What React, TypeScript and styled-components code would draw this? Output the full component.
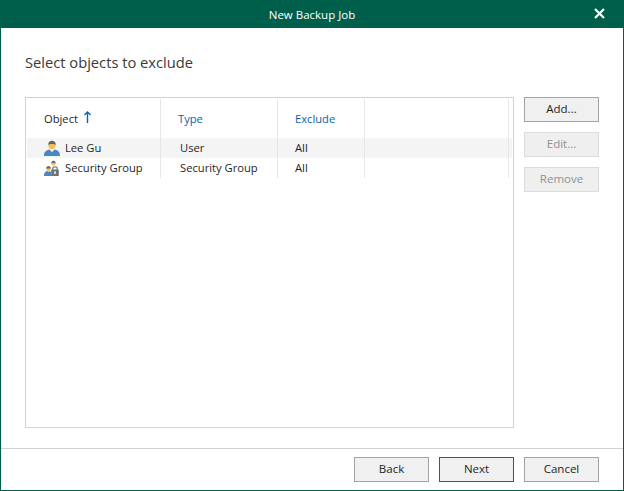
import React from 'react'
import styled, { createGlobalStyle } from 'styled-components'

const GlobalStyle = createGlobalStyle`
  html, body {
    margin: 0;
    padding: 0;
    background: #ffffff;
  }
  body {
    font-family: 'Open Sans', 'Noto Sans', sans-serif;
    font-size: 11.5px;
    color: #1f1f1f;
  }
`

const Window = styled.div`
  width: 624px;
  height: 491px;
  box-sizing: border-box;
  display: flex;
  flex-direction: column;
  border: 1px solid #005f4b;
  border-top: 0;
  background: #ffffff;
  overflow: hidden;
`
const TitleBar = styled.div`
  height: 28px;
  flex: none;
  margin: 0 -1px;
  position: relative;
  display: flex;
  align-items: center;
  justify-content: center;
  background: #005f4b;
  color: #ffffff;
  font-size: 11.5px;
`
const CloseIcon = styled.svg`
  position: absolute;
  right: 19px;
  top: 8px;
  width: 11px;
  height: 11px;
`
const Body = styled.div`
  flex: 1;
  display: flex;
  flex-direction: column;
  padding: 0 24px;
`
const Heading = styled.div`
  height: 69px;
  padding-top: 24px;
  box-sizing: border-box;
  font-size: 14.7px;
  line-height: 20px;
  color: #3a3a3a;
`
const Content = styled.div`
  display: flex;
  gap: 10px;
`
const TableBox = styled.div`
  width: 489px;
  height: 331px;
  box-sizing: border-box;
  border: 1px solid #d2d2d2;
  padding: 1px 1px 0;
  font-size: 11.2px;
`
const Row = styled.div<{ $header?: boolean; $selected?: boolean }>`
  display: grid;
  grid-template-columns: 134px 117px 87px 144px 1fr;
  height: ${({ $header }) => ($header ? '39px' : '20px')};
  background: ${({ $selected }) => ($selected ? '#f4f4f4' : 'transparent')};
`
const Cell = styled.div<{ $plain?: boolean }>`
  display: flex;
  align-items: center;
  box-sizing: border-box;
  border-right: ${({ $plain }) => ($plain ? '0' : '1px solid #e6e6e6')};
  white-space: nowrap;
`
const ObjectCell = styled(Cell)`
  padding: 0 0 2px 17px;
  gap: 5px;
`
const IconSlot = styled.span`
  display: flex;
  margin-top: 2px;
`
const DataCell = styled(Cell)<{ $tight?: boolean }>`
  padding: 0 0 2px ${({ $tight }) => ($tight ? '17px' : '19px')};
`
const HeaderCell = styled(Cell)<{ $link?: boolean }>`
  padding-left: 17px;
  color: ${({ $link }) => ($link ? '#0a64a8' : '#1f1f1f')};
`
const SortArrow = styled.svg`
  margin-left: 6px;
  margin-top: -3px;
  width: 7px;
  height: 12px;
`
const Side = styled.div`
  width: 75px;
  display: flex;
  flex-direction: column;
  gap: 10px;
`
const Button = styled.button<{ $primary?: boolean }>`
  width: 75px;
  height: 25px;
  padding: 0 0 2px;
  box-sizing: border-box;
  font-family: inherit;
  font-size: 11.5px;
  background: ${({ disabled }) => (disabled ? '#efefef' : '#f0f0f0')};
  color: ${({ disabled }) => (disabled ? '#8f8f8f' : '#1f1f1f')};
  border: ${({ disabled, $primary }) =>
    $primary ? '1px solid #0a64a8' : disabled ? '1px solid #dcdcdc' : '1px solid #a3a3a3'};
`
const Footer = styled.div`
  height: 42px;
  flex: none;
  box-sizing: border-box;
  border-top: 1px solid #d2d2d2;
  display: flex;
  justify-content: flex-end;
  gap: 10px;
  padding: 8px 24px 0 0;
`

const UserIcon = () => (
  <svg width="16" height="16" viewBox="0 0 16 16">
    <path d="M0 16 C0 12 2 10.5 5.5 9.6 L8 12 L10.5 9.6 C14 10.5 16 12 16 16 Z" fill="#4a86c0" />
    <path d="M5.8 9.4 L8 11.6 L10.2 9.4 L9.6 8 H6.4 Z" fill="#f4f4f4" />
    <circle cx="8" cy="5.4" r="3.6" fill="#f3bd5e" />
    <path d="M4.2 5 C4.2 2 6 0.8 8 0.8 C10 0.8 11.8 2 11.8 5 C10 3.8 6 3.8 4.2 5 Z" fill="#5f6468" />
  </svg>
)

const GroupIcon = () => (
  <svg width="16" height="16" viewBox="0 0 16 16">
    <path d="M0 16 C0 13 1 11.5 3.5 11 L4.5 12 L5.5 11 C7 11.4 7.5 12.5 7.5 16 Z" fill="#4a86c0" />
    <circle cx="4.5" cy="8.8" r="2.3" fill="#f3bd5e" />
    <path d="M2.2 8.4 C2.4 6.8 3.4 6.3 4.5 6.3 C5.6 6.3 6.6 6.8 6.8 8.4 Z" fill="#5f6468" />
    <circle cx="9.5" cy="3.4" r="2.2" fill="#f3bd5e" />
    <path d="M7.3 3 C7.5 1.4 8.4 0.8 9.5 0.8 C10.6 0.8 11.5 1.4 11.7 3 Z" fill="#6c7074" />
    <path d="M8.8 10 V8.6 C8.8 6.2 13.2 6.2 13.2 8.6 V10" fill="none" stroke="#777b7e" strokeWidth="1.3" />
    <rect x="7.2" y="9.6" width="7.6" height="6.4" rx="0.6" fill="#6f7376" />
    <rect x="10.3" y="11.3" width="1.4" height="2.8" fill="#ffffff" />
  </svg>
)

const rows = [
  { name: 'Lee Gu', type: 'User', exclude: 'All', icon: <UserIcon />, selected: true },
  { name: 'Security Group', type: 'Security Group', exclude: 'All', icon: <GroupIcon />, selected: false },
]

export default function App() {
  return (
    <Window>
      <GlobalStyle />
      <TitleBar>
        New Backup Job
        <CloseIcon viewBox="0 0 11 11">
          <path d="M1 1 L10 10 M10 1 L1 10" stroke="#ffffff" strokeWidth="2.2" fill="none" />
        </CloseIcon>
      </TitleBar>
      <Body>
        <Heading>Select objects to exclude</Heading>
        <Content>
          <TableBox>
            <Row $header>
              <HeaderCell>
                Object
                <SortArrow viewBox="0 0 7 12">
                  <path d="M3.5 12 V1 M0.5 4 L3.5 1 L6.5 4" stroke="#0a64a8" strokeWidth="1.4" fill="none" />
                </SortArrow>
              </HeaderCell>
              <HeaderCell $link>Type</HeaderCell>
              <HeaderCell $link>Exclude</HeaderCell>
              <Cell />
              <Cell $plain />
            </Row>
            {rows.map((row) => (
              <Row key={row.name} $selected={row.selected}>
                <ObjectCell>
                  <IconSlot>{row.icon}</IconSlot>
                  {row.name}
                </ObjectCell>
                <DataCell>{row.type}</DataCell>
                <DataCell $tight>{row.exclude}</DataCell>
                <Cell />
                <Cell $plain />
              </Row>
            ))}
          </TableBox>
          <Side>
            <Button>Add...</Button>
            <Button disabled>Edit...</Button>
            <Button disabled>Remove</Button>
          </Side>
        </Content>
      </Body>
      <Footer>
        <Button>Back</Button>
        <Button $primary>Next</Button>
        <Button>Cancel</Button>
      </Footer>
    </Window>
  )
}
